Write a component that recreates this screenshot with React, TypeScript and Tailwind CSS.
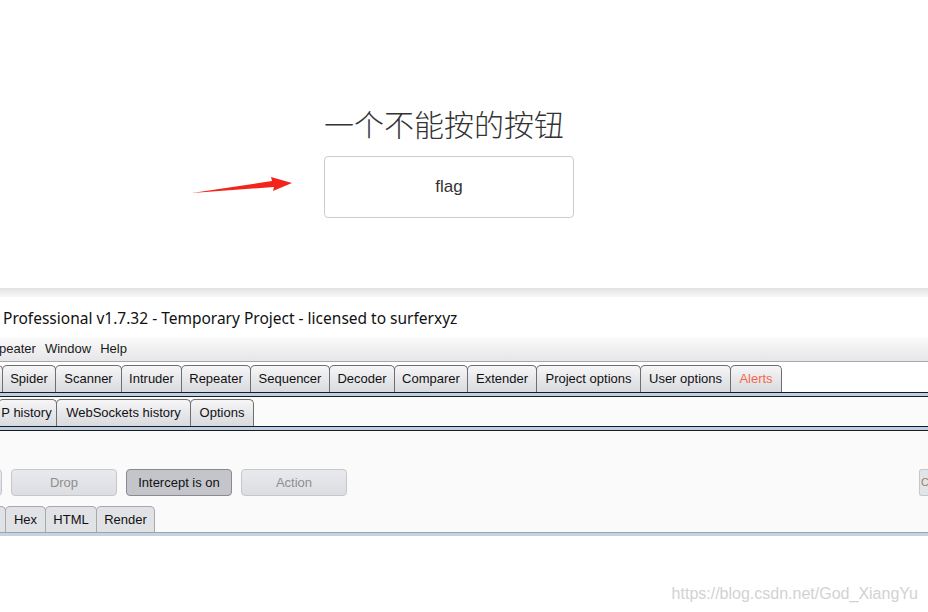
const tabsMain = [
  { label: 'Spider', w: 'w-[54px]' },
  { label: 'Scanner', w: 'w-[67px]' },
  { label: 'Intruder', w: 'w-[61px]' },
  { label: 'Repeater', w: 'w-[70px]' },
  { label: 'Sequencer', w: 'w-[80px]' },
  { label: 'Decoder', w: 'w-[66px]' },
  { label: 'Comparer', w: 'w-[74px]' },
  { label: 'Extender', w: 'w-[70px]' },
  { label: 'Project options', w: 'w-[105px]' },
  { label: 'User options', w: 'w-[91px]' },
];

function Tab({
  label,
  className = '',
  margin = '-ml-px',
  textClass = 'text-[#111]',
}: {
  label: string;
  className?: string;
  margin?: string;
  textClass?: string;
}) {
  return (
    <div
      className={`${margin} h-[27px] shrink-0 flex items-center justify-center rounded-t-[5px] border border-b-0 border-[#6e6e6e] bg-gradient-to-b from-[#f6f6f7] to-[#d9dadf] text-[13px] whitespace-nowrap ${textClass} ${className}`}
    >
      {label}
    </div>
  );
}

function Separator() {
  return <div className="h-[5px] border-y border-[#1c1c1c] bg-[#bcd0e5]" />;
}

function ToolButton({ label, active = false, className = '' }: { label: string; active?: boolean; className?: string }) {
  return (
    <div
      className={`h-[27px] w-[106px] shrink-0 flex items-center justify-center rounded-[4px] border text-[13px] ${
        active
          ? 'border-[#8a8a8f] bg-[#c3c5cb] text-[#111]'
          : 'border-[#c6c7cb] bg-gradient-to-b from-[#e9eaed] to-[#dcdde2] text-[#8e8e8e]'
      } ${className}`}
    >
      {label}
    </div>
  );
}

function Arrow() {
  return (
    <svg className="absolute left-[190px] top-[176px]" width="104" height="22" viewBox="0 0 104 22">
      <polygon points="2,17 84,11 83,15 102,7 81,1 82,5" fill="#f2241c" />
    </svg>
  );
}

function HexTab({ label, className }: { label: string; className: string }) {
  return (
    <div
      className={`-ml-px h-[26px] shrink-0 flex items-center justify-center rounded-t-[5px] border border-b-0 border-[#a9a9ad] bg-[#e1e2e6] text-[13px] text-[#111] ${className}`}
    >
      {label}
    </div>
  );
}

export default function App() {
  return (
    <div className="w-[928px] h-[612px] overflow-hidden bg-white font-['Liberation_Sans',Arial,sans-serif]">
      {/* web page part */}
      <div className="relative h-[288px]">
        <Arrow />
        <div className="ml-[324px] w-[250px] pt-[104px] flex flex-col items-center">
          <h1 className="pr-[10px] text-[30px] leading-[38px] text-[#333] font-['Noto_Sans_CJK_SC',sans-serif] font-light">
            一个不能按的按钮
          </h1>
          <div className="mt-[14px] h-[62px] w-[250px] flex items-center justify-center rounded-[4px] border border-[#cccccc] text-[17px] text-[#333]">
            flag
          </div>
        </div>
      </div>

      {/* burp window */}
      <div className="h-[9px] bg-gradient-to-b from-[#e2e2e2] to-[#f7f7f7]" />
      <div className="h-[40px] bg-white flex items-center pl-[3px] pt-[3px] text-[15.5px] text-[#111] font-['Noto_Sans',sans-serif]">
        Professional v1.7.32 - Temporary Project - licensed to surferxyz
      </div>
      <div className="h-[25px] flex items-center gap-[9px] border-b border-[#a9a9a9] bg-gradient-to-b from-[#fbfbfb] to-[#e6e6e9] text-[13px] text-[#1a1a1a]">
        <span className="-ml-px">peater</span>
        <span>Window</span>
        <span>Help</span>
      </div>

      <div className="h-[30px] pt-[3px] bg-white flex overflow-hidden">
        <Tab label="" margin="-ml-[40px]" className="w-[43px]" />
        {tabsMain.map((t) => (
          <Tab key={t.label} label={t.label} className={t.w} />
        ))}
        <Tab label="Alerts" className="w-[52px]" textClass="text-[#f5684b]" />
      </div>
      <Separator />

      <div className="h-[29px] pt-[2px] bg-[#fbfbfb] flex overflow-hidden">
        <Tab label="P history" margin="-ml-[2px]" className="w-[59px] pr-[2px]" />
        <Tab label="WebSockets history" className="w-[135px]" />
        <Tab label="Options" className="w-[64px]" />
      </div>
      <Separator />

      <div className="h-[101px] bg-[#fafafa] flex flex-col overflow-hidden">
        <div className="mt-[38px] flex items-center gap-[9px]">
          <ToolButton label="" className="-ml-[104px]" />
          <ToolButton label="Drop" />
          <ToolButton label="Intercept is on" active />
          <ToolButton label="Action" />
          <div className="ml-auto -mr-px h-[27px] w-[10px] shrink-0 flex items-center pl-[1px] rounded-l-[3px] border border-r-0 border-[#c6c7cb] bg-[#e3e4e8] text-[11px] text-[#9a7f5f]">
            C
          </div>
        </div>
        <div className="mt-[10px] flex">
          <div className="-ml-[30px] h-[26px] w-[36px] shrink-0 rounded-t-[5px] border border-b-0 border-[#a9a9ad] bg-[#e1e2e6]" />
          <HexTab label="Hex" className="w-[41px]" />
          <HexTab label="HTML" className="w-[52px]" />
          <HexTab label="Render" className="w-[59px]" />
        </div>
      </div>
      <div className="h-[4px] border-t border-[#a3a3a3] bg-[#c3d3e5]" />

      <div className="flex justify-end pr-[10px] pt-[46px] text-[16px] text-[#d2d2d2]">
        https://blog.csdn.net/God_XiangYu
      </div>
    </div>
  );
}
